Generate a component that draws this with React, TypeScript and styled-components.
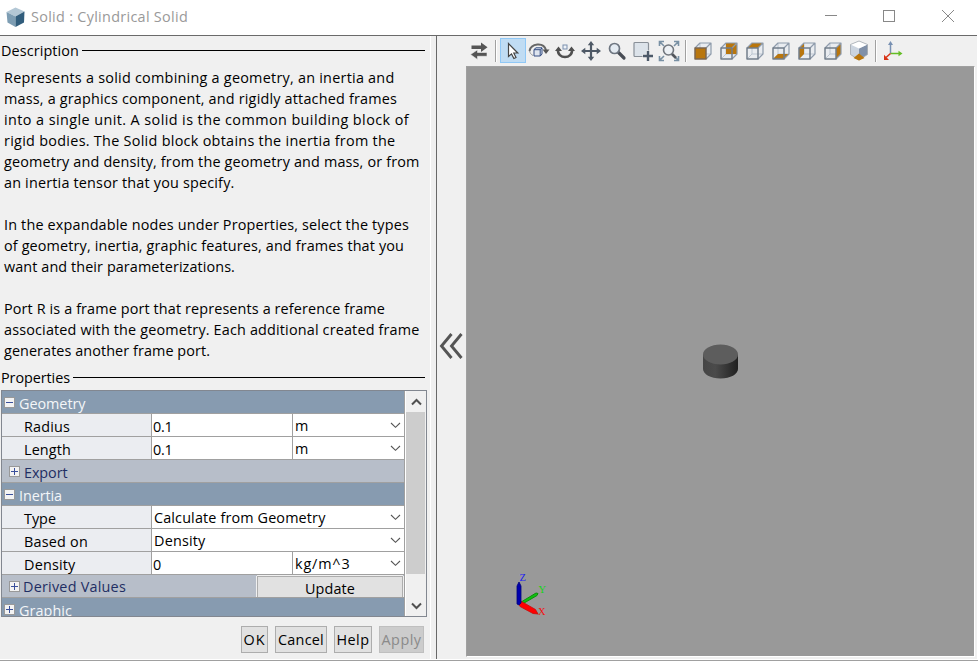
import React, { useLayoutEffect, useRef, useState } from 'react';
import styled, { createGlobalStyle } from 'styled-components';

const GlobalStyle = createGlobalStyle`
  *, *::before { box-sizing: border-box; }
  body { margin: 0; background: #fff; overflow: hidden; }
`;

const Window = styled.div`
  width: 978px;
  height: 661px;
  display: flex;
  flex-direction: column;
  background: #fff;
  font-family: 'Open Sans', 'Noto Sans', sans-serif;
  font-size: 14.4px;
  color: #000;
`;

const TitleBar = styled.header`
  height: 35px;
  flex: none;
  display: flex;
  align-items: center;
  padding-left: 6px;
  color: #999;
`;

const TitleText = styled.div`
  margin-left: 6px;
  line-height: 20px;
  padding-bottom: 1px;
`;

const WindowControls = styled.div`
  margin-left: auto;
  margin-right: 1px;
  display: flex;
  align-self: flex-start;
  height: 32px;
`;

const ControlButton = styled.div`
  width: 58.5px;
  height: 32px;
  display: grid;
  place-items: center;
`;

const Body = styled.main`
  flex: 1;
  width: 977px;
  display: flex;
  background: #f0f0f0;
  border-top: 1px solid #6a6a6a;
`;

const StatusEdge = styled.div`
  height: 2px;
  flex: none;
  border-top: 1px solid #fff;
  background: #a0a0a0;
`;

const LeftPane = styled.section`
  width: 431px;
  flex: none;
  border-right: 1px solid #fff;
`;

const Gutter = styled.div`
  width: 35px;
  flex: none;
  display: flex;
  padding-left: 5px;
`;

const Divider = styled.div`
  width: 1px;
  background: #696969;
`;

const CollapseHandle = styled.div`
  width: 29px;
  display: flex;
  align-items: center;
  justify-content: center;
  padding: 0 2px 3px 0;
`;

const GroupTitle = styled.div<{ $h: number }>`
  height: ${p => p.$h}px;
  width: 425px;
  display: flex;
  align-items: center;
  gap: 3px;
  padding: 0 0 2px 1px;
  line-height: 20px;
`;

const Rule = styled.div`
  flex: 1;
  height: 1px;
  margin-bottom: 1px;
  background: #000;
`;

const Description = styled.div`
  padding: 0 0 0 4px;
  height: 300px;
`;

const TextLine = styled.div`
  height: 21px;
  line-height: 21px;
`;

const Run = styled.span`
  white-space: pre;
`;

const Tree = styled.div`
  margin-left: 1px;
  width: 426px;
  height: 227px;
  display: flex;
  border: 1px solid #828790;
  overflow: hidden;
`;

const Rows = styled.div`
  width: 403px;
  flex: none;
  border-right: 1px solid #a0a0a0;
`;

const HeaderRow = styled.div<{ $sub?: boolean }>`
  height: 23px;
  display: flex;
  align-items: center;
  gap: 4px;
  padding-left: ${p => (p.$sub ? 7 : 2)}px;
  border-bottom: 1px solid #a0a0a0;
  background: ${p => (p.$sub ? '#b7bec9' : '#879bb0')};
  color: ${p => (p.$sub ? '#1f2e63' : '#f4f6f8')};
`;

const HeaderLabel = styled.div<{ $up?: boolean }>`
  height: 23px;
  line-height: 24px;
  padding-top: ${p => (p.$up ? 0 : 1)}px;
  margin-left: ${p => (p.$up ? -1 : 0)}px;
`;

const Toggle = styled.div`
  width: 11px;
  height: 11px;
  flex: none;
  margin-top: 1px;
`;

const FieldRow = styled.div`
  height: 23px;
  display: flex;
  border-bottom: 1px solid #a0a0a0;
  background: #fff;
  line-height: 22px;
`;

const FieldLabel = styled.div`
  width: 150px;
  flex: none;
  padding: 2px 0 0 22px;
  background: #ebedf1;
  border-right: 1px solid #a0a0a0;
  height: 22px;
`;

const FieldValue = styled.div`
  width: 141px;
  flex: none;
  padding: 2px 0 0 1px;
  border-right: 1px solid #a0a0a0;
  height: 22px;
`;

const Select = styled.div`
  flex: 1;
  display: flex;
  align-items: center;
  justify-content: space-between;
  padding: 1px 3px 0 2px;
  height: 22px;
`;

const UpdateButton = styled.button`
  margin: 1px 1px 0 auto;
  width: 146px;
  height: 21px;
  align-self: flex-start;
  border: 1px solid #adadad;
  border-bottom: 0;
  box-shadow: -1px 0 0 #f0f0f0, 1px 0 0 #f0f0f0, 0 -1px 0 #f0f0f0;
  background: #e1e1e1;
  padding: 2px 0 0;
  font: inherit;
  line-height: 19px;
  color: #000;
`;

const ScrollBar = styled.div`
  width: 21px;
  display: flex;
  flex-direction: column;
  background: #f0f0f0;
  border-left: 1px solid #fff;
`;

const ScrollArrow = styled.div<{ $h: number; $end?: boolean }>`
  height: ${p => p.$h}px;
  flex: none;
  display: flex;
  justify-content: center;
  align-items: ${p => (p.$end ? 'flex-end' : 'center')};
  padding-bottom: ${p => (p.$end ? 6 : 0)}px;
`;

const Thumb = styled.div`
  height: 162px;
  flex: none;
  width: 19px;
  background: #cdcdcd;
`;

const ButtonBar = styled.div`
  display: flex;
  justify-content: flex-end;
  gap: 7px;
  padding: 9px 6px 0 0;
`;

const DialogButton = styled.button<{ $w: number }>`
  width: ${p => p.$w}px;
  height: 27px;
  padding: 1px 0 0;
  font: inherit;
  line-height: 24px;
  white-space: nowrap;
  color: #000;
  background: #e1e1e1;
  border: 1px solid #adadad;
  &:disabled {
    color: #8a8a8a;
    background: #ccc;
    border-color: #bfbfbf;
  }
`;

const RightPane = styled.section`
  width: 510px;
  display: flex;
  flex-direction: column;
`;

const Toolbar = styled.div`
  height: 30px;
  display: flex;
  padding-top: 2px;
`;

const ToolButton = styled.div<{ $active?: boolean }>`
  width: 26px;
  height: 25px;
  display: grid;
  place-items: center;
  background: ${p => (p.$active ? '#c0dcf3' : 'transparent')};
  border: 1px solid ${p => (p.$active ? '#90c8f6' : 'transparent')};
`;

const ToolSeparator = styled.div<{ $w: number }>`
  width: ${p => p.$w}px;
  height: 22px;
  margin-top: 2px;
  display: flex;
  justify-content: center;
  &::before {
    content: '';
    width: 2px;
    background: #a0a0a0;
    border-right: 1px solid #fff;
  }
`;

const Viewport = styled.div`
  flex: 1;
  margin-bottom: 2px;
  width: 509px;
  background: #999;
  border: 1px solid #a0a0a0;
  border-right-color: #fff;
  border-bottom-color: #fff;
`;

const Scene = styled.svg`
  display: block;
`;

/** A run of text whose letter spacing is adjusted to fill a given width. */
function Fit({ w, children }: { w: number; children: string }) {
  const ref = useRef<HTMLSpanElement>(null);
  const [spacing, setSpacing] = useState(0);
  useLayoutEffect(() => {
    if (!ref.current) return;
    const natural = ref.current.getBoundingClientRect().width;
    setSpacing((w - natural) / children.length);
  }, [w, children]);
  return <Run ref={ref} style={{ letterSpacing: `${spacing}px` }}>{children}</Run>;
}

const paragraph: [string, number][] = [
  ['Represents a solid combining a geometry, an inertia and', 390.5],
  ['mass, a graphics component, and rigidly attached frames', 393],
  ['into a single unit. A solid is the common building block of', 405],
  ['rigid bodies. The Solid block obtains the inertia from the', 391.5],
  ['geometry and density, from the geometry and mass, or from', 415.5],
  ['an inertia tensor that you specify.', 230.5],
  ['', 0],
  ['In the expandable nodes under Properties, select the types', 405],
  ['of geometry, inertia, graphic features, and frames that you', 400],
  ['want and their parameterizations.', 231],
  ['', 0],
  ['Port R is a frame port that represents a reference frame', 381],
  ['associated with the geometry. Each additional created frame', 415.5],
  ['generates another frame port.', 206],
];

function ToggleIcon({ open }: { open?: boolean }) {
  return (
    <Toggle>
      <svg width="11" height="11" display="block">
        <rect x="0.5" y="0.5" width="10" height="10" fill="#f3f3f3" stroke="#999" />
        <path d={open ? 'M2 5.5H9' : 'M2 5.5H9M5.5 2V9'} stroke="#3a509c" />
      </svg>
    </Toggle>
  );
}

const Chevron = () => (
  <svg width="11" height="7" viewBox="0 0 11 7" fill="none" stroke="#555" strokeWidth="1.1">
    <path d="M1 1 5.5 5.3 10 1" />
  </svg>
);

function Field({ label, w, value, vw, unit, uw }: { label: string; w: number; value?: string; vw?: number; unit: string; uw: number }) {
  return (
    <FieldRow>
      <FieldLabel><Fit w={w}>{label}</Fit></FieldLabel>
      {value !== undefined && <FieldValue><Fit w={vw ?? 9}>{value}</Fit></FieldValue>}
      <Select><Fit w={uw}>{unit}</Fit><Chevron /></Select>
    </FieldRow>
  );
}

type Face = 'front' | 'back' | 'top' | 'bottom' | 'left' | 'right';
const facePaths: Record<Face, string> = {
  front: 'M2 7H13V18H2Z',
  back: 'M7 2H18V13H7Z',
  top: 'M2 7 7 2H18L13 7Z',
  bottom: 'M2 18 7 13H18L13 18Z',
  left: 'M2 7 7 2V13L2 18Z',
  right: 'M13 7 18 2V13L13 18Z',
};

function CubeIcon({ face }: { face: Face }) {
  return (
    <svg width="20" height="20" viewBox="0 0 20 20" fill="none" strokeLinejoin="round">
      <path d="M2 7 7 2H18V13L13 18H2Z" fill="#e9ecf0" />
      <path d="M7 2V13H18M7 13 2 18" stroke="#bcc6d1" />
      <path d={facePaths[face]} fill="#b9760d" />
      <path d="M2 7 7 2H18V13L13 18M13 7 18 2" stroke="#8e9bab" strokeWidth="1.2" />
      <path d="M2 7H13V18H2Z" stroke={face === 'front' ? '#7b6650' : '#717d8b'} strokeWidth="1.5" />
    </svg>
  );
}

const SwapIcon = () => (
  <svg width="20" height="20" viewBox="0 0 20 20" fill="#555">
    <path d="M2.500 4.500H12V1.500L18.500 6.200 12 11V8H2.500Z" />
    <path d="M18 11.500H8.500V8.800L1.500 13.500 8.500 18.500V15.300H18Z" stroke="#f0f0f0" strokeWidth=".6" />
  </svg>
);

const PointerIcon = () => (
  <svg width="20" height="20" viewBox="0 0 20 20">
    <path d="M5.500 2.500V15.500L8.500 12.900 10.900 17.500 13 16.500 10.800 12H14.800Z" fill="#fff" stroke="#444" strokeWidth="1.200" />
  </svg>
);

const OrbitIcon = () => (
  <svg width="22" height="20" viewBox="0 0 22 20" fill="none">
    <path d="M1.500 10C3 2.500 15.500 .8 18 9" stroke="#666" strokeWidth="2" />
    <path d="M14.500 8.500H21.500L18 13Z" fill="#555" />
    <path d="M1.500 10C2 12 3 13.500 5 14.500" stroke="#999" />
    <path d="M6 8.500 8 6.800H14V13L12.300 15H6Z" fill="#dfe5ef" stroke="#344d82" />
    <path d="M6 8.700H12.200V15M12.200 8.700 14 7" stroke="#344d82" />
  </svg>
);

const RollIcon = () => (
  <svg width="20" height="20" viewBox="0 0 20 20" fill="none">
    <path d="M3 8.500C2 18.500 18 18.500 17 8.500" stroke="#505050" strokeWidth="2.500" />
    <path d="M0 10 3.500 5.500 7 10ZM13 10 16.500 5.500 20 10Z" fill="#505050" />
    <rect x="8" y="4" width="4" height="4" fill="#eef2f7" stroke="#7a8fae" />
  </svg>
);

const PanIcon = () => (
  <svg width="20" height="20" viewBox="0 0 20 20" fill="#4e5966">
    <path d="M8.900 4H11.100V8.900H16V11.100H11.100V16H8.900V11.100H4V8.900H8.900Z" />
    <path d="M10 0 13.200 4.300H6.800ZM10 20 6.800 15.700H13.200ZM0 10 4.300 6.800V13.200ZM20 10 15.700 13.200V6.800Z" />
  </svg>
);

const ZoomIcon = () => (
  <svg width="20" height="20" viewBox="0 0 20 20" fill="none">
    <path d="M11.500 11.500 17 17" stroke="#484d55" strokeWidth="3.200" strokeLinecap="round" />
    <circle cx="7.500" cy="7.500" r="5" fill="#e4ebf2" stroke="#6e7681" strokeWidth="1.700" />
  </svg>
);

const ZoomRegionIcon = () => (
  <svg width="20" height="20" viewBox="0 0 20 20" fill="none">
    <rect x="1" y="1.500" width="14.500" height="14" rx="1" fill="#dce3ea" stroke="#899098" strokeWidth="1.200" />
    <path d="M15 9.500V20.500M9.500 15H20.500" stroke="#f0f0f0" strokeWidth="3.400" />
    <path d="M15 10V20M10 15H20" stroke="#4c5969" strokeWidth="2.400" />
  </svg>
);

const FitIcon = () => (
  <svg width="22" height="22" viewBox="0 0 22 22" fill="none">
    <path d="M1.500 6V1.500H6M16 1.500H20.500V6M1.500 16V20.500H6M16 20.500H20.500V16M2 2 6 6M20 2 16 6M2 20 6 16M20 20 16 16" stroke="#7890a4" strokeWidth="1.600" />
    <path d="M13.500 13.500 18 18" stroke="#52565c" strokeWidth="2.600" />
    <circle cx="10.500" cy="10" r="5" fill="#edf1f5" stroke="#72777e" strokeWidth="1.600" />
  </svg>
);

const IsoIcon = () => (
  <svg width="20" height="22" viewBox="0 0 20 22">
    <path d="M10 1 18.500 4.500V14.500L10 20 1.500 14.500V4.500Z" fill="#cbd4df" />
    <path d="M10 8.500 18.500 4.500V14.500L10 20Z" fill="#8090a8" />
    <path d="M10 1 18.500 4.500 10 8.500 1.500 4.500Z" fill="#fff" />
    <path d="M10 1 18.500 4.500V14.500L10 20 1.500 14.500V4.500Z" fill="none" stroke="#a2a8af" strokeWidth=".8" />
    <path d="M10 13.500 15.500 18 10 20.500 4.500 18Z" fill="#b9760d" />
  </svg>
);

const AxesIcon = () => (
  <svg width="22" height="22" viewBox="0 0 22 22">
    <path d="M8.500 13.500V4" stroke="#7890b2" strokeWidth="1.500" />
    <path d="M6 5 8.500 1 11 5Z" fill="#7890b2" />
    <path d="M8.500 13.500H17" stroke="#64bd25" strokeWidth="1.500" />
    <path d="M16.500 10.700 20.500 13.500 16.500 16.300Z" fill="#64bd25" />
    <path d="M8.500 13.500 4 17.500" stroke="#d83417" strokeWidth="1.500" />
    <path d="M2 14.800V20H7Z" fill="#d83417" />
  </svg>
);

const AppIcon = () => (
  <svg width="19" height="22" viewBox="0 0 19 22">
    <path d="M9.500 .5 18.500 4.500 9.500 9.500 .500 5Z" fill="#b3c7d5" />
    <path d="M.500 5 9.500 9.500V20L1.500 15.500Z" fill="#7d9db3" />
    <path d="M18.500 4.500 9.500 9.500V20L18 15.500Z" fill="#315d7c" />
  </svg>
);

export default function App() {
  return (
    <>
      <GlobalStyle />
      <Window>
        <TitleBar>
          <AppIcon />
          <TitleText><Fit w={157}>Solid : Cylindrical Solid</Fit></TitleText>
          <WindowControls>
            <ControlButton><svg width="12" height="12"><path d="M0 5.500H12" stroke="#888" /></svg></ControlButton>
            <ControlButton><svg width="12" height="12"><rect x=".5" y=".5" width="11" height="11" fill="none" stroke="#888" /></svg></ControlButton>
            <ControlButton><svg width="12" height="12"><path d="M0 0 12 12M12 0 0 12" stroke="#888" /></svg></ControlButton>
          </WindowControls>
        </TitleBar>
        <Body>
          <LeftPane>
            <GroupTitle $h={31}><Fit w={78}>Description</Fit><Rule /></GroupTitle>
            <Description>
              {paragraph.map(([text, w], i) => (
                <TextLine key={i}>{text && <Fit w={w}>{text}</Fit>}</TextLine>
              ))}
            </Description>
            <GroupTitle $h={23}><Fit w={69}>Properties</Fit><Rule /></GroupTitle>
            <Tree>
              <Rows>
                <HeaderRow><ToggleIcon open /><HeaderLabel><Fit w={66.5}>Geometry</Fit></HeaderLabel></HeaderRow>
                <Field label="Radius" w={46} value="0.1" vw={19.5} unit="m" uw={14} />
                <Field label="Length" w={47} value="0.1" vw={19.5} unit="m" uw={14} />
                <HeaderRow $sub><ToggleIcon /><HeaderLabel><Fit w={43.5}>Export</Fit></HeaderLabel></HeaderRow>
                <HeaderRow><ToggleIcon open /><HeaderLabel><Fit w={43}>Inertia</Fit></HeaderLabel></HeaderRow>
                <Field label="Type" w={32} unit="Calculate from Geometry" uw={171.5} />
                <Field label="Based on" w={64} unit="Density" uw={51.5} />
                <Field label="Density" w={51.5} value="0" unit="kg/m^3" uw={55.5} />
                <HeaderRow $sub>
                  <ToggleIcon /><HeaderLabel $up><Fit w={103}>Derived Values</Fit></HeaderLabel>
                  <UpdateButton><Fit w={50}>Update</Fit></UpdateButton>
                </HeaderRow>
                <HeaderRow><ToggleIcon /><HeaderLabel><Fit w={53}>Graphic</Fit></HeaderLabel></HeaderRow>
              </Rows>
              <ScrollBar>
                <ScrollArrow $h={21}><svg width="11" height="8" fill="none" stroke="#505050" strokeWidth="2"><path d="M1 6.500 5.500 2 10 6.500" /></svg></ScrollArrow>
                <Thumb />
                <ScrollArrow $h={42} $end><svg width="11" height="8" fill="none" stroke="#505050" strokeWidth="2"><path d="M1 1.500 5.500 6 10 1.500" /></svg></ScrollArrow>
              </ScrollBar>
            </Tree>
            <ButtonBar>
              <DialogButton $w={27}><Fit w={22}>OK</Fit></DialogButton>
              <DialogButton $w={52}><Fit w={46}>Cancel</Fit></DialogButton>
              <DialogButton $w={38}><Fit w={33}>Help</Fit></DialogButton>
              <DialogButton $w={45} disabled><Fit w={40}>Apply</Fit></DialogButton>
            </ButtonBar>
          </LeftPane>
          <Gutter>
            <Divider />
            <CollapseHandle>
              <svg width="24" height="28" viewBox="0 0 24 28" fill="none" stroke="#555" strokeWidth="2.900">
                <path d="M12.500 2 2.500 14 12.500 26M22.500 2 12.500 14 22.500 26" />
              </svg>
            </CollapseHandle>
          </Gutter>
          <RightPane>
            <Toolbar>
              <ToolButton><SwapIcon /></ToolButton>
              <ToolSeparator $w={8} />
              <ToolButton $active><PointerIcon /></ToolButton>
              <ToolButton><OrbitIcon /></ToolButton>
              <ToolButton><RollIcon /></ToolButton>
              <ToolButton><PanIcon /></ToolButton>
              <ToolButton><ZoomIcon /></ToolButton>
              <ToolButton><ZoomRegionIcon /></ToolButton>
              <ToolButton><FitIcon /></ToolButton>
              <ToolSeparator $w={8} />
              <ToolButton><CubeIcon face="front" /></ToolButton>
              <ToolButton><CubeIcon face="back" /></ToolButton>
              <ToolButton><CubeIcon face="top" /></ToolButton>
              <ToolButton><CubeIcon face="bottom" /></ToolButton>
              <ToolButton><CubeIcon face="left" /></ToolButton>
              <ToolButton><CubeIcon face="right" /></ToolButton>
              <ToolButton><IsoIcon /></ToolButton>
              <ToolSeparator $w={8} />
              <ToolButton><AxesIcon /></ToolButton>
            </Toolbar>
            <Viewport>
              <Scene width="507" height="589" viewBox="467 67 507 589">
                <defs>
                  <linearGradient id="side" x1="0" x2="1" y1="0" y2="0">
                    <stop offset="0" stopColor="#454545" />
                    <stop offset=".35" stopColor="#4b4b4b" />
                    <stop offset="1" stopColor="#202020" />
                  </linearGradient>
                </defs>
                <path d="M703 354.500V369C703 374 710.500 378.500 720.500 378.500S738 374 738 369V354.500Z" fill="url(#side)" />
                <ellipse cx="720.500" cy="354.500" rx="17.500" ry="10" fill="#5d5d5d" />
                <path d="M519.500 603 536 593 538 593.500 537 595.500 521.500 604.500Z" fill="#10c010" stroke="#0a900a" />
                <path d="M518.500 603.500 521.500 601.500 535.500 609.500 538 614 533 613.500 520 606.500Z" fill="#f00" stroke="#c80a0a" strokeWidth=".8" />
                <path d="M517 604V586L519 582 521 586V603L519 605Z" fill="#0000ae" stroke="#00007c" strokeWidth=".8" />
                <g fontFamily="'Liberation Serif', serif" fontSize="10.500">
                  <text x="519.500" y="581" fill="#1c1cf0">Z</text>
                  <text x="538.500" y="593" fill="#14d414">Y</text>
                  <text x="538" y="615" fill="#f01414">X</text>
                </g>
              </Scene>
            </Viewport>
          </RightPane>
        </Body>
        <StatusEdge />
      </Window>
    </>
  );
}
